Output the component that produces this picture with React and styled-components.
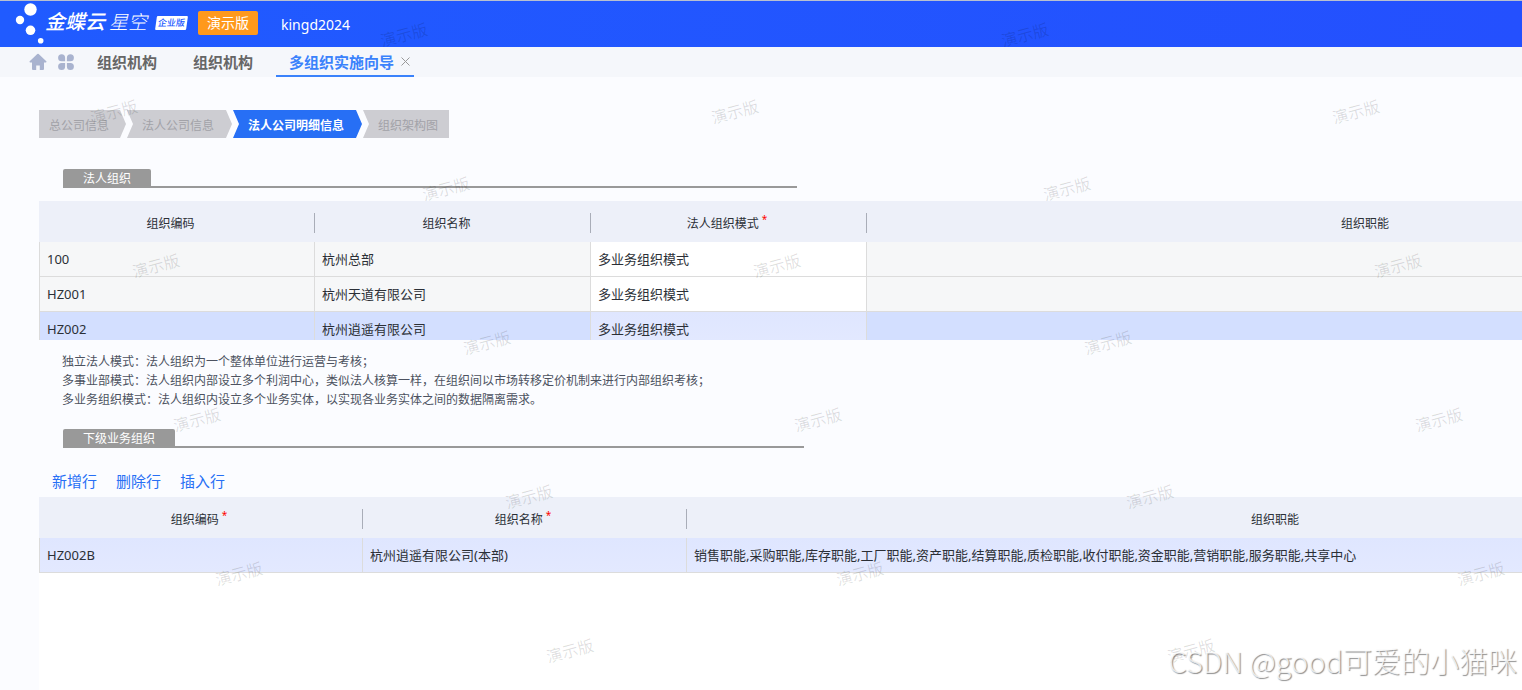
import React from 'react';
import styled, { createGlobalStyle, css } from 'styled-components';

const GlobalStyle = createGlobalStyle`
  * {
    box-sizing: border-box;
  }

  body {
    margin: 0;
    background: #fbfcff;
    color: #2b2f36;
    font-family: 'Noto Sans', 'Noto Sans CJK SC', sans-serif;
    font-size: 13px;
  }

  button {
    padding: 0;
    border: 0;
    background: none;
    font: inherit;
    color: inherit;
    cursor: pointer;
  }
`;

const Page = styled.div`
  position: relative;
  display: flex;
  flex-direction: column;
  min-height: 100vh;
  overflow: hidden;
`;

const Header = styled.header`
  display: flex;
  align-items: center;
  height: 47px;
  padding: 0 0 2px 15px;
  border-top: 1px solid #b9c0d0;
  background: linear-gradient(90deg, #205bff, #2450fe);
  color: #fff;
`;

const LogoMark = styled.svg`
  width: 30px;
  height: 42px;
  flex: none;
`;

const Brand = styled.h1`
  display: flex;
  align-items: center;
  gap: 4px;
  margin: 0;
  padding-bottom: 2px;
  font-size: 20px;
  font-style: italic;
  font-weight: 500;
  line-height: 24px;
  white-space: nowrap;
`;

const BrandLight = styled.span`
  font-size: 19px;
  font-weight: 300;
`;

const Edition = styled.span`
  margin-left: 9px;
  padding: 0 2px;
  border-radius: 1px;
  background: #fff;
  color: #2159ff;
  font-size: 9px;
  font-weight: 500;
  line-height: 14px;
  transform: skewX(-8deg);
  white-space: nowrap;
`;

const DemoBadge = styled.span`
  margin-left: 11px;
  padding: 0 9px;
  border-radius: 2px;
  background: #ff991c;
  font-size: 14px;
  line-height: 24px;
  white-space: nowrap;
`;

const Account = styled.span`
  margin-left: 23px;
  padding-top: 2px;
  font-size: 14px;
`;

const TabBar = styled.nav`
  display: flex;
  align-items: stretch;
  height: 30px;
  padding-left: 28px;
  background: #f5f7fb;
`;

const IconButton = styled.button`
  display: flex;
  align-items: center;
  width: 28px;
  padding-left: 1px;

  svg {
    width: 18px;
    height: 18px;
  }
`;

const Tab = styled.div`
  display: flex;
  align-items: center;
  gap: 7px;
  margin-right: 10px;
  padding: 0 13px;
  border-bottom: 2px solid transparent;
  color: #666;
  font-size: 15px;
  font-weight: 700;
  ${p => p.$active && css`
    padding-right: 4px;
    border-color: #3a82fb;
    color: #3a82fb;
  `}
`;

const CloseButton = styled.button`
  display: flex;

  svg {
    width: 9px;
    height: 9px;
  }
`;

const Content = styled.main`
  flex: 1;
  display: flex;
  flex-direction: column;
  padding: 33px 0 0 39px;
`;

const Steps = styled.ol`
  display: flex;
  gap: 1px;
  margin: 0;
  padding: 0;
  list-style: none;
`;

const Step = styled.li`
  width: ${p => p.$width}px;
  height: 28px;
  padding-left: ${p => (p.$first ? 10 : 15)}px;
  background: ${p => (p.$active ? '#276ff5' : '#cdcdd2')};
  color: ${p => (p.$active ? '#fff' : '#a2a2a8')};
  font-size: 12px;
  font-weight: ${p => (p.$active ? 700 : 400)};
  line-height: 32px;
  white-space: nowrap;
  clip-path: polygon(
    0 0,
    ${p => (p.$last ? '100%' : 'calc(100% - 6px)')} 0,
    100% 50%,
    ${p => (p.$last ? '100%' : 'calc(100% - 6px)')} 100%,
    0 100%,
    ${p => (p.$first ? '0' : '6px')} 50%
  );
`;

const SectionTitle = styled.div`
  display: flex;
  width: ${p => p.$width}px;
  max-width: 100%;
  margin-left: 24px;
  border-bottom: 2px solid #999;
`;

const SectionLabel = styled.h2`
  height: 17px;
  margin: 0;
  padding: 0 20px;
  border-radius: 2px 2px 0 0;
  background: #999;
  color: #fff;
  font-size: 12px;
  font-weight: 400;
  line-height: 19px;
`;

const LegalSection = styled.section`
  margin-top: 31px;
`;

const UnitSection = styled.section`
  flex: 1;
  display: flex;
  flex-direction: column;
  margin-top: 20px;
`;

const GridBox = styled.div`
  overflow: hidden;
  ${p => p.$height && css`
    height: ${p.$height}px;
    margin-top: 13px;
  `}
  ${p => p.$fill && css`
    flex: 1;
    background: #fff;
  `}
`;

const Grid = styled.table`
  width: 1824px;
  border-collapse: separate;
  border-spacing: 0;
  table-layout: fixed;
`;

const HeadCell = styled.th`
  height: 41px;
  padding: 4px ${p => (p.$required ? 4 : 13)}px 0 0;
  background:
    linear-gradient(#a9adb8, #a9adb8) right 12px / 1px 20px no-repeat,
    #edf0f9;
  font-size: 12px;
  font-weight: 400;
  line-height: 20px;

  &:last-child {
    padding-right: 0;
    background: #edf0f9;
  }
`;

const Required = styled.sup`
  margin-left: 3px;
  color: #f00;
  font-size: 10px;
  line-height: 0;
`;

const Cell = styled.td`
  height: 35px;
  padding: 0 7px;
  border-right: 1px solid #dcdcdc;
  border-bottom: 1px solid #dcdcdc;
  background: ${p => (p.$editable ? '#fff' : '#f6f7f8')};
  font-size: 13px;
  line-height: 20px;
  white-space: nowrap;

  &:first-child {
    border-left: 1px solid #dcdcdc;
  }

  ${p => p.$selected && css`
    background: ${p.$editable ? 'linear-gradient(#dfe6ff, #e3e9ff)' : '#d3dfff'};
  `}
`;

const Notes = styled.div`
  padding: 12px 0 0 23px;
  color: #4c5260;
  font-size: 12px;
  line-height: 19px;

  p {
    margin: 0;
  }
`;

const Toolbar = styled.div`
  display: flex;
  gap: 19px;
  padding: 22px 0 5px 13px;
`;

const ToolButton = styled.button`
  color: #276ff5;
  font-size: 15px;
  line-height: 22px;
`;

const Watermarks = styled.div`
  position: absolute;
  inset: 0;
  overflow: hidden;
  pointer-events: none;
`;

const Watermark = styled.span`
  position: absolute;
  width: 60px;
  margin: -13px 0 0 -30px;
  color: rgba(0, 0, 0, 0.13);
  font-size: 16px;
  line-height: 24px;
  text-align: center;
  transform: rotate(-15deg);
`;

const Signature = styled.div`
  position: absolute;
  right: 5px;
  bottom: 8px;
  color: rgba(255, 255, 255, 0.75);
  font-family: 'Noto Sans CJK SC', sans-serif;
  font-size: 29px;
  font-weight: 300;
  line-height: 44px;
  text-shadow: 1px 1px 1px rgba(0, 0, 0, 0.45);
  white-space: nowrap;
  pointer-events: none;
`;

const steps = [
  { label: '总公司信息', width: 87 },
  { label: '法人公司信息', width: 105 },
  { label: '法人公司明细信息', width: 129, active: true },
  { label: '组织架构图', width: 86 },
];

const legalColumns = [
  { title: '组织编码', width: 276 },
  { title: '组织名称', width: 276 },
  { title: '法人组织模式', width: 276, required: true, editable: true },
  { title: '组织职能' },
];

const legalRows = [
  { cells: ['100', '杭州总部', '多业务组织模式', ''] },
  { cells: ['HZ001', '杭州天道有限公司', '多业务组织模式', ''] },
  { cells: ['HZ002', '杭州逍遥有限公司', '多业务组织模式', ''], selected: true },
];

const unitColumns = [
  { title: '组织编码', width: 324, required: true, editable: true },
  { title: '组织名称', width: 324, required: true, editable: true },
  { title: '组织职能', editable: true },
];

const unitRows = [
  {
    cells: [
      'HZ002B',
      '杭州逍遥有限公司(本部)',
      '销售职能,采购职能,库存职能,工厂职能,资产职能,结算职能,质检职能,收付职能,资金职能,营销职能,服务职能,共享中心',
    ],
    selected: true,
  },
];

// Odd rows start half a step to the left, every second row drifts right.
const marks = [];
for (let row = 0; row < 9; row += 1) {
  const start = (row % 2 ? 114 : 404) + Math.round(Math.floor(row / 2) * 41.5);
  for (let col = 0; col < (row % 2 ? 3 : 2); col += 1) {
    marks.push({ x: start + col * 621, y: 36 + row * 77 });
  }
}

const DataGrid = ({ columns, rows, label }) => (
  <Grid aria-label={label}>
    <colgroup>
      {columns.map(c => <col key={c.title} width={c.width} />)}
    </colgroup>
    <thead>
      <tr>
        {columns.map(c => (
          <HeadCell key={c.title} $required={c.required}>
            {c.title}
            {c.required && <Required>*</Required>}
          </HeadCell>
        ))}
      </tr>
    </thead>
    <tbody>
      {rows.map(row => (
        <tr key={row.cells[0]}>
          {row.cells.map((text, i) => (
            <Cell key={columns[i].title} $editable={columns[i].editable} $selected={row.selected}>{text}</Cell>
          ))}
        </tr>
      ))}
    </tbody>
  </Grid>
);

const App = () => (
  <>
    <GlobalStyle />
    <Page>
      <Header>
        <LogoMark viewBox="0 0 30 42" fill="#fff">
          <circle cx="15.500" cy="7.500" r="6.200" />
          <circle cx="5" cy="18" r="4.200" />
          <circle cx="15.500" cy="28.300" r="4.800" />
          <circle cx="25.700" cy="38.700" r="2.800" />
        </LogoMark>
        <Brand>
          金蝶云
          <BrandLight>星空</BrandLight>
        </Brand>
        <Edition>企业版</Edition>
        <DemoBadge>演示版</DemoBadge>
        <Account>kingd2024</Account>
      </Header>
      <TabBar>
        <IconButton aria-label="Home">
          <svg viewBox="0 0 18 18" fill="#a9b3cf">
            <path d="M9 .8a1 1 0 0 1 .7.3l7.600 7.200c.5.500.2 1.200-.5 1.200H15v6.500a1 1 0 0 1-1 1h-3.200v-4.500H7.200V17H4a1 1 0 0 1-1-1V9.500H1.200c-.7 0-1-.7-.5-1.200l7.600-7.200A1 1 0 0 1 9 .8z" />
          </svg>
        </IconButton>
        <IconButton aria-label="Apps">
          <svg viewBox="0 0 18 18" fill="#a9b3cf">
            <path d="M4.600 1.200A3.500 3.500 0 0 1 8.100 4.700V8.200H4.600a3.500 3.500 0 0 1 0-7zM13.400 1.200a3.500 3.500 0 0 1 0 7H9.900V4.700A3.500 3.500 0 0 1 13.400 1.200zM4.600 10H8.100v3.500A3.500 3.500 0 1 1 4.600 10zM9.900 10h3.500a3.500 3.500 0 1 1-3.500 3.500z" />
          </svg>
        </IconButton>
        <Tab><button>组织机构</button></Tab>
        <Tab><button>组织机构</button></Tab>
        <Tab $active>
          <button>多组织实施向导</button>
          <CloseButton aria-label="Close">
            <svg viewBox="0 0 9 9" stroke="#999" fill="none">
              <path d="M.5.5l8 8M8.500.5l-8 8" />
            </svg>
          </CloseButton>
        </Tab>
      </TabBar>
      <Content>
        <Steps>
          {steps.map((step, i) => (
            <Step
              key={step.label}
              $width={step.width}
              $active={step.active}
              $first={i === 0}
              $last={i === steps.length - 1}
            >
              {step.label}
            </Step>
          ))}
        </Steps>
        <LegalSection>
          <SectionTitle $width={734}>
            <SectionLabel>法人组织</SectionLabel>
          </SectionTitle>
          <GridBox $height={139}>
            <DataGrid columns={legalColumns} rows={legalRows} label="法人组织" />
          </GridBox>
          <Notes>
            <p>独立法人模式：法人组织为一个整体单位进行运营与考核；</p>
            <p>多事业部模式：法人组织内部设立多个利润中心，类似法人核算一样，在组织间以市场转移定价机制来进行内部组织考核；</p>
            <p>多业务组织模式：法人组织内设立多个业务实体，以实现各业务实体之间的数据隔离需求。</p>
          </Notes>
        </LegalSection>
        <UnitSection>
          <SectionTitle $width={741}>
            <SectionLabel>下级业务组织</SectionLabel>
          </SectionTitle>
          <Toolbar>
            <ToolButton>新增行</ToolButton>
            <ToolButton>删除行</ToolButton>
            <ToolButton>插入行</ToolButton>
          </Toolbar>
          <GridBox $fill>
            <DataGrid columns={unitColumns} rows={unitRows} label="下级业务组织" />
          </GridBox>
        </UnitSection>
      </Content>
      <Watermarks aria-hidden="true">
        {marks.map(({ x, y }) => (
          <Watermark key={`${x}-${y}`} style={{ left: x, top: y }}>演示版</Watermark>
        ))}
      </Watermarks>
      <Signature>CSDN @good可爱的小猫咪</Signature>
    </Page>
  </>
);

export default App;
